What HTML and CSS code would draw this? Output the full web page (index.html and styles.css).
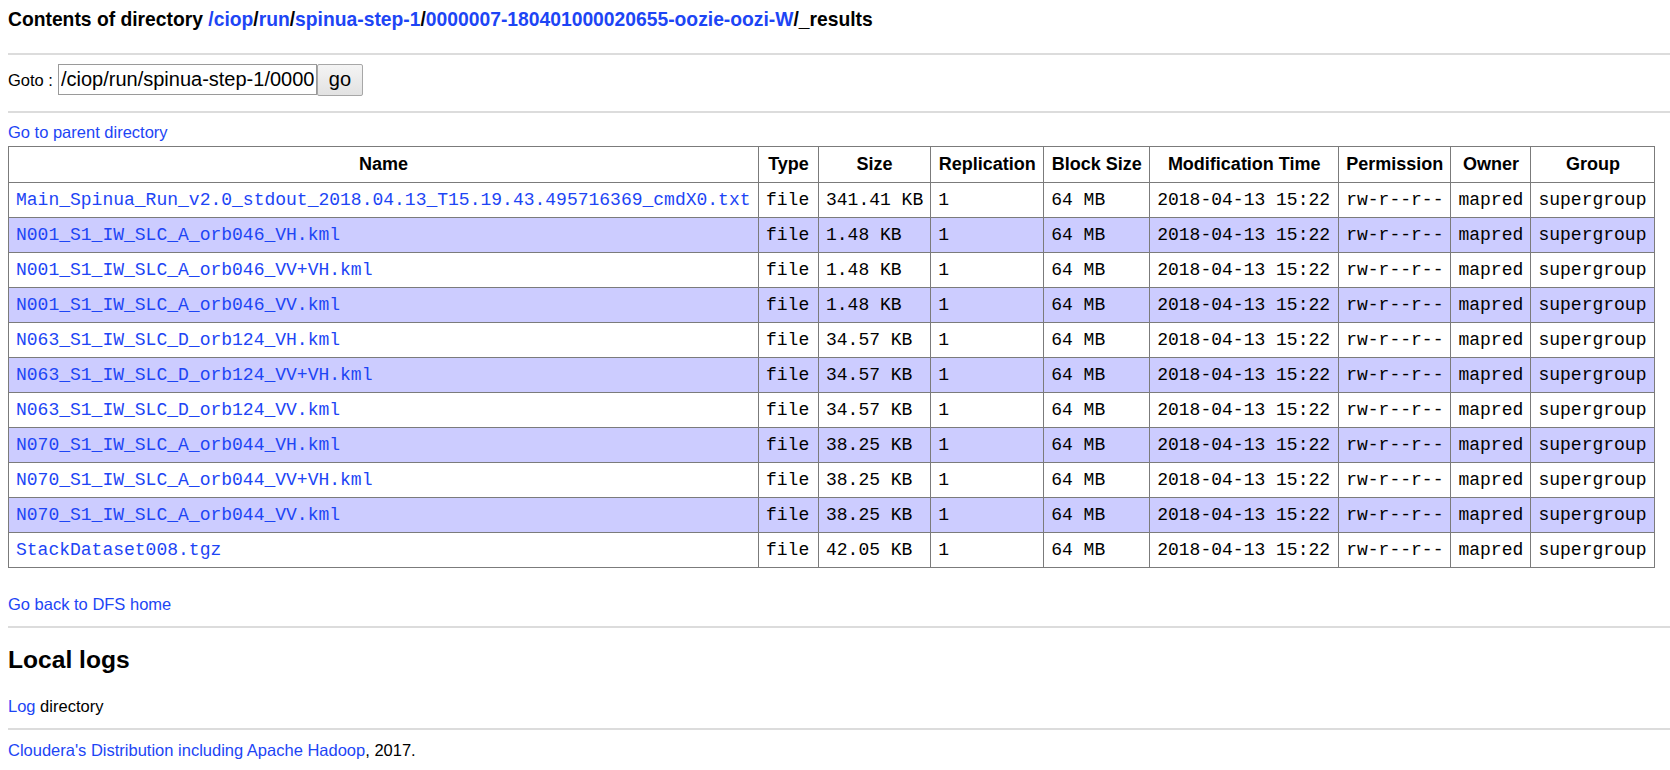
FILE: index.html
```html
<!DOCTYPE html>
<html>
<head>
<meta charset="utf-8">
<title>HDFS:/ciop/run/spinua-step-1/0000007-180401000020655-oozie-oozi-W/_results</title>
<link rel="stylesheet" href="styles.css">
</head>
<body>
<h1 class="title">Contents of directory <a href="#">/ciop</a>/<a href="#">run</a>/<a href="#">spinua-step-1</a>/<a href="#">0000007-180401000020655-oozie-oozi-W</a>/_results</h1>
<hr class="rule rule-top">
<form class="goto">
  <span class="goto-label">Goto :</span>
  <input class="goto-input" type="text" value="/ciop/run/spinua-step-1/0000007-180401000020655-oozie-oozi-W/_results">
  <button class="goto-btn" type="button">go</button>
</form>
<hr class="rule rule-goto">
<div class="line parent"><a href="#">Go to parent directory</a></div>
<table class="files">
  <thead>
    <tr>
      <th class="c-name">Name</th><th class="c-type">Type</th><th class="c-size">Size</th><th class="c-rep">Replication</th><th class="c-block">Block Size</th><th class="c-mtime">Modification Time</th><th class="c-perm">Permission</th><th class="c-owner">Owner</th><th class="c-group">Group</th>
    </tr>
  </thead>
  <tbody>
    <tr><td><a href="#">Main_Spinua_Run_v2.0_stdout_2018.04.13_T15.19.43.495716369_cmdX0.txt</a></td><td>file</td><td>341.41 KB</td><td>1</td><td>64 MB</td><td>2018-04-13 15:22</td><td>rw-r--r--</td><td>mapred</td><td>supergroup</td></tr>
    <tr class="alt"><td><a href="#">N001_S1_IW_SLC_A_orb046_VH.kml</a></td><td>file</td><td>1.48 KB</td><td>1</td><td>64 MB</td><td>2018-04-13 15:22</td><td>rw-r--r--</td><td>mapred</td><td>supergroup</td></tr>
    <tr><td><a href="#">N001_S1_IW_SLC_A_orb046_VV+VH.kml</a></td><td>file</td><td>1.48 KB</td><td>1</td><td>64 MB</td><td>2018-04-13 15:22</td><td>rw-r--r--</td><td>mapred</td><td>supergroup</td></tr>
    <tr class="alt"><td><a href="#">N001_S1_IW_SLC_A_orb046_VV.kml</a></td><td>file</td><td>1.48 KB</td><td>1</td><td>64 MB</td><td>2018-04-13 15:22</td><td>rw-r--r--</td><td>mapred</td><td>supergroup</td></tr>
    <tr><td><a href="#">N063_S1_IW_SLC_D_orb124_VH.kml</a></td><td>file</td><td>34.57 KB</td><td>1</td><td>64 MB</td><td>2018-04-13 15:22</td><td>rw-r--r--</td><td>mapred</td><td>supergroup</td></tr>
    <tr class="alt"><td><a href="#">N063_S1_IW_SLC_D_orb124_VV+VH.kml</a></td><td>file</td><td>34.57 KB</td><td>1</td><td>64 MB</td><td>2018-04-13 15:22</td><td>rw-r--r--</td><td>mapred</td><td>supergroup</td></tr>
    <tr><td><a href="#">N063_S1_IW_SLC_D_orb124_VV.kml</a></td><td>file</td><td>34.57 KB</td><td>1</td><td>64 MB</td><td>2018-04-13 15:22</td><td>rw-r--r--</td><td>mapred</td><td>supergroup</td></tr>
    <tr class="alt"><td><a href="#">N070_S1_IW_SLC_A_orb044_VH.kml</a></td><td>file</td><td>38.25 KB</td><td>1</td><td>64 MB</td><td>2018-04-13 15:22</td><td>rw-r--r--</td><td>mapred</td><td>supergroup</td></tr>
    <tr><td><a href="#">N070_S1_IW_SLC_A_orb044_VV+VH.kml</a></td><td>file</td><td>38.25 KB</td><td>1</td><td>64 MB</td><td>2018-04-13 15:22</td><td>rw-r--r--</td><td>mapred</td><td>supergroup</td></tr>
    <tr class="alt"><td><a href="#">N070_S1_IW_SLC_A_orb044_VV.kml</a></td><td>file</td><td>38.25 KB</td><td>1</td><td>64 MB</td><td>2018-04-13 15:22</td><td>rw-r--r--</td><td>mapred</td><td>supergroup</td></tr>
    <tr><td><a href="#">StackDataset008.tgz</a></td><td>file</td><td>42.05 KB</td><td>1</td><td>64 MB</td><td>2018-04-13 15:22</td><td>rw-r--r--</td><td>mapred</td><td>supergroup</td></tr>
  </tbody>
</table>
<div class="line home"><a href="#">Go back to DFS home</a></div>
<hr class="rule rule-home">
<h2 class="logs-title">Local logs</h2>
<div class="line logs"><a href="#">Log</a> directory</div>
<hr class="rule rule-logs">
<div class="line footer"><a href="#">Cloudera's Distribution including Apache Hadoop</a>, 2017.</div>
</body>
</html>
```

FILE: styles.css
```css
html, body {
  background: #ffffff;
}

body {
  margin: 0;
  padding: 9px 8px 0 8px;
  font-family: "Liberation Sans", Arial, sans-serif;
  font-size: 16.5px;
  color: #000;
}

a {
  color: #1d45f5;
  text-decoration: none;
}

.title {
  margin: 0;
  font-size: 19.3px;
  line-height: 22px;
  font-weight: bold;
}

.rule {
  display: block;
  border: 0;
  height: 2px;
  background: #dcdcdc;
  margin: 0 -8px 0 0;
}

.rule-top {
  margin-top: 21.5px;
}

.goto {
  display: flex;
  align-items: baseline;
  margin: 9px 0 0 0;
  height: 31px;
}

.goto-label {
  font-size: 16.5px;
  margin-right: 5px;
}

.goto-input {
  box-sizing: border-box;
  width: 259px;
  height: 31px;
  margin: 0;
  padding: 1px 2px;
  border: 1px solid #9a9a9a;
  font-family: "Liberation Sans", Arial, sans-serif;
  font-size: 20px;
  color: #000;
  background: #fff;
}

.goto-btn {
  box-sizing: border-box;
  width: 46px;
  height: 32px;
  margin: 0;
  padding: 0 6px;
  border: 1px solid #a7a7a7;
  border-radius: 2px;
  background: linear-gradient(#f4f4f4, #e2e2e2);
  font-family: "Liberation Sans", Arial, sans-serif;
  font-size: 20px;
  color: #000;
}

.rule-goto {
  margin-top: 16px;
}

.line {
  line-height: 19px;
}

.parent {
  margin-top: 10px;
}

.files {
  margin-top: 4px;
  border-collapse: collapse;
  border: 1px solid #7b7b7b;
}

.files th,
.files td {
  box-sizing: border-box;
  border: 1px solid #7b7b7b;
  white-space: nowrap;
}

.files th {
  font-family: "Liberation Sans", Arial, sans-serif;
  font-size: 18px;
  font-weight: bold;
  line-height: 23px;
  padding: 6px 7px;
  text-align: center;
}

.files td {
  font-family: "Liberation Mono", "Courier New", monospace;
  font-size: 18px;
  line-height: 22px;
  padding: 6px 7px;
  text-align: left;
}

.files .c-name { width: 750px; }
.files .c-type { width: 60px; }
.files .c-size { width: 112px; }
.files .c-rep { width: 113px; }
.files .c-block { width: 106px; }
.files .c-mtime { width: 189px; }
.files .c-perm { width: 112px; }
.files .c-owner { width: 80px; }
.files .c-group { width: 124px; }

.files tr.alt td {
  background: #ccccff;
}

.home {
  margin-top: 27.5px;
}

.rule-home {
  margin-top: 11.5px;
}

.logs-title {
  margin: 18px 0 0 0;
  font-size: 24.6px;
  line-height: 28px;
  font-weight: bold;
}

.logs {
  margin-top: 23px;
}

.rule-logs {
  margin-top: 12px;
}

.footer {
  margin-top: 11px;
}
```
